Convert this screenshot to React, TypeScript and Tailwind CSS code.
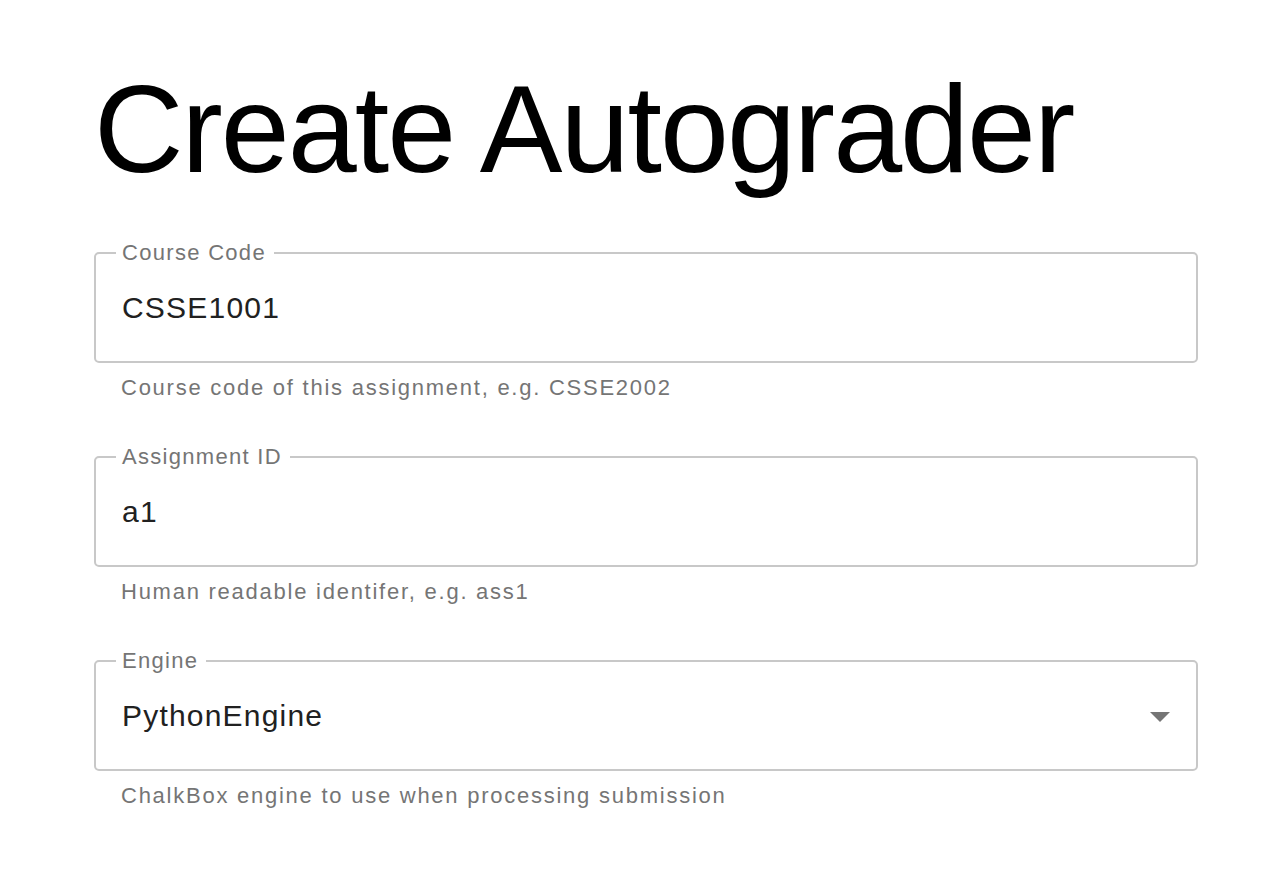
import React from 'react';

interface Field {
  label: string;
  value: string;
  helper: string;
  select?: boolean;
}

const fields: Field[] = [
  { label: 'Course Code', value: 'CSSE1001', helper: 'Course code of this assignment, e.g. CSSE2002' },
  { label: 'Assignment ID', value: 'a1', helper: 'Human readable identifer, e.g. ass1' },
  { label: 'Engine', value: 'PythonEngine', helper: 'ChalkBox engine to use when processing submission', select: true },
];

const ArrowDropDown = () => (
  <svg viewBox="0 0 24 24" className="w-[48px] h-[48px] -my-[9px] fill-[#757575] shrink-0">
    <path d="M7 10l5 5 5-5z" />
  </svg>
);

const OutlinedField: React.FC<Field> = ({ label, value, helper, select }) => (
  <div className="mb-[47px]">
    <fieldset className="border-2 border-[#c8c8c8] rounded-[5px] w-[1104px]">
      <legend className="ml-[20px] pl-[6px] pr-[8px] text-[22px] leading-[22px] tracking-[1.3px] text-[#757575]">
        {label}
      </legend>
      <div className="flex items-center justify-between pl-[26px] pr-[12px] pt-[29px] pb-[38px]">
        <span className="text-[30px] leading-[30px] tracking-[1.2px] text-[#212121]">{value}</span>
        {select && <ArrowDropDown />}
      </div>
    </fieldset>
    <p className="mt-[14px] ml-[27px] text-[22px] leading-[22px] tracking-[1.75px] text-[#757575]">{helper}</p>
  </div>
);

const App: React.FC = () => (
  <div className="min-h-screen bg-white font-['Liberation_Sans',Arial,sans-serif]">
    <div className="h-0 w-full shadow-[0_2px_4px_-1px_rgba(0,0,0,0.2),0_4px_5px_0_rgba(0,0,0,0.14),0_1px_10px_0_rgba(0,0,0,0.12)]" />
    <div className="pt-[67px] pl-[94px]">
      <h1 className="text-[124px] leading-none tracking-[-2px] text-black mb-[51px]">Create Autograder</h1>
      {fields.map((field, index) => (
        <OutlinedField key={index} {...field} />
      ))}
    </div>
  </div>
);

export default App;
